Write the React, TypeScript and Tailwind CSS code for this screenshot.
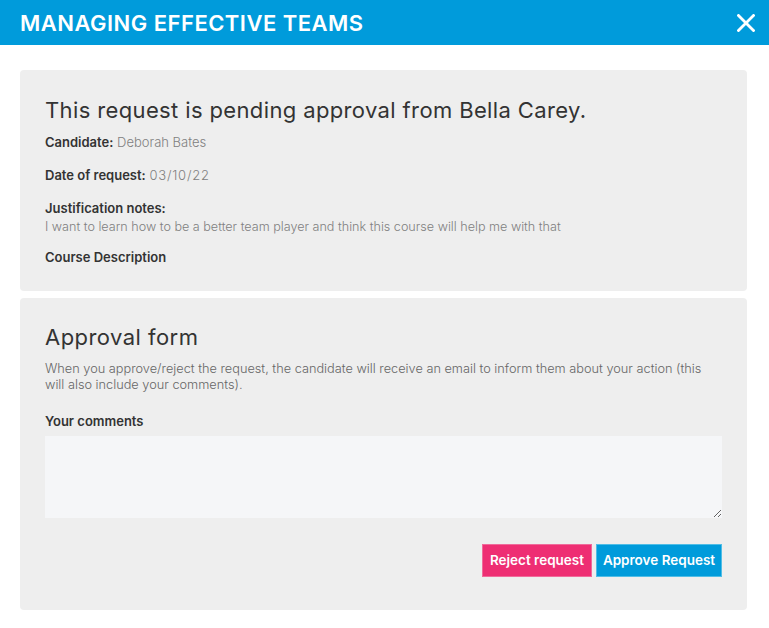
import React from 'react';

const font = { fontFamily: 'Inter, "Noto Sans", sans-serif' };

export default function App() {
  return (
    <div className="min-h-[628px] w-[769px] bg-white text-[#333333]" style={font}>
      {/* Header */}
      <div className="flex h-[45px] items-center justify-between bg-[#009bdb] pl-[20px] pr-[11px]">
        <h1 className="text-[22px] font-semibold uppercase leading-none tracking-[0.48px] text-white">
          Managing effective teams
        </h1>
        <button className="flex h-[24px] w-[24px] items-center justify-center text-white">
          <svg width="18" height="18" viewBox="0 0 18 18" fill="none">
            <path d="M1.5 1.5L16.5 16.5M16.5 1.5L1.5 16.5" stroke="white" strokeWidth="2.8" strokeLinecap="square" />
          </svg>
        </button>
      </div>

      <div className="flex flex-col gap-[7px] pl-[20px] pr-[22px] pt-[25px]">
        {/* Request details */}
        <div className="rounded-[4px] bg-[#eeeeee] pl-[25px] pr-[25px] pt-[26px] pb-[25px]">
          <h2 className="text-[22px] font-normal leading-[28px] tracking-[0.37px] text-[#333333]">
            This request is pending approval from Bella Carey.
          </h2>
          <p className="mt-[9px] text-[13px] leading-[18px]">
            <span className="font-semibold">Candidate:</span>{' '}
            <span className="font-light text-[#808080]">Deborah Bates</span>
          </p>
          <p className="mt-[15px] text-[13px] leading-[18px]">
            <span className="font-semibold">Date of request:</span>{' '}
            <span className="font-light tracking-[0.8px] text-[#808080]">03/10/22</span>
          </p>
          <p className="mt-[15px] text-[13px] font-semibold leading-[18px]">Justification notes:</p>
          <p className="mt-[1px] text-[12.6px] font-light leading-[18px] text-[#808080]">
            I want to learn how to be a better team player and think this course will help me with that
          </p>
          <p className="mt-[12px] text-[13px] font-semibold leading-[18px]">Course Description</p>
        </div>

        {/* Approval form */}
        <div className="rounded-[4px] bg-[#eeeeee] pl-[25px] pr-[25px] pt-[25px] pb-[33px]">
          <h2 className="text-[22px] font-normal leading-[28px] tracking-[0.45px] text-[#333333]">
            Approval form
          </h2>
          <p className="mt-[10px] text-[12.75px] font-light leading-[16px] text-[#666666]">
            When you approve/reject the request, the candidate will receive an email to inform them about your action (this
            will also include your comments).
          </p>
          <label className="mt-[19px] block text-[13px] font-semibold leading-[18px]">Your comments</label>
          <textarea className="mt-[6px] block h-[82px] w-full resize-y bg-[#f5f6f8] p-2 text-[13px] outline-none" />
          <div className="mt-[26px] flex justify-end gap-[4px]">
            <button className="h-[33px] w-[110px] border border-[#f06a9a] bg-[#ee2e73] text-[13.5px] font-semibold text-white">
              Reject request
            </button>
            <button className="h-[33px] w-[126px] border border-[#4fbde6] bg-[#009bdb] text-[13.5px] font-semibold text-white">
              Approve Request
            </button>
          </div>
        </div>
      </div>
    </div>
  );
}
